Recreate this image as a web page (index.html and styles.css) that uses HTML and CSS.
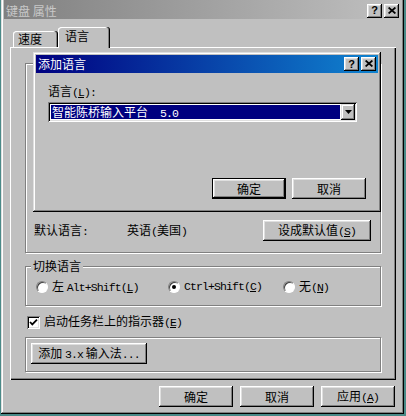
FILE: index.html
```html
<!DOCTYPE html>
<html lang="zh-CN">
<head>
<meta charset="utf-8">
<title>键盘 属性</title>
<link rel="stylesheet" href="styles.css">
</head>
<body>
<div class="win">
  <div class="cap cap-inactive">
    <span class="cap-text">键盘 属性</span>
    <span class="cap-btns">
      <span class="cbtn cbtn-q">?</span>
      <span class="cbtn"><svg width="8" height="7" viewBox="0 0 8 7"><path d="M0.6 0.5 L7.4 6.5 M7.4 0.5 L0.6 6.5" stroke="#000" stroke-width="1.7"/></svg></span>
    </span>
  </div>
  <div class="tabs">
    <div class="tab tab-1">速度</div>
    <div class="tab tab-2">语言</div>
  </div>
  <div class="panel">
    <div class="grp grp-1">
      <div class="defrow">
        <span class="def-label">默认语言<span class="m">:</span></span>
        <span class="def-value">英语<span class="m">(</span>美国<span class="m">)</span></span>
        <button class="btn btn-setdef"><span>设成默认值<span class="m">(<u>S</u>)</span></span></button>
      </div>
    </div>
    <div class="grp grp-2">
      <span class="legend">切换语言</span>
      <div class="radios">
        <span class="ropt ropt-1"><span class="radio"></span><span>左 <span class="m">Alt+Shift(<u>L</u>)</span></span></span>
        <span class="ropt ropt-2"><span class="radio"><span class="dot"></span></span><span class="m">Ctrl+Shift(<u>C</u>)</span></span>
        <span class="ropt"><span class="radio"></span><span>无<span class="m">(<u>N</u>)</span></span></span>
      </div>
    </div>
    <div class="chkrow">
      <span class="chk"><svg width="9" height="9" viewBox="0 0 9 9"><path d="M1 4 L3.3 6.4 L8 1.6" fill="none" stroke="#000" stroke-width="1.8"/></svg></span>
      <span>启动任务栏上的指示器<span class="m">(<u>E</u>)</span></span>
    </div>
    <div class="grp grp-3">
      <button class="btn btn-add"><span>添加 <span class="m">3.x</span> 输入法<span class="m">...</span></span></button>
    </div>

    <div class="dlg">
      <div class="cap cap-active">
        <span class="cap-text">添加语言</span>
        <span class="cap-btns">
          <span class="cbtn cbtn-q">?</span>
          <span class="cbtn"><svg width="8" height="7" viewBox="0 0 8 7"><path d="M0.6 0.5 L7.4 6.5 M7.4 0.5 L0.6 6.5" stroke="#000" stroke-width="1.7"/></svg></span>
        </span>
      </div>
      <div class="dlg-body">
        <div class="dlg-label">语言<span class="m">(<u>L</u>):</span></div>
        <div class="combo">
          <div class="combo-sel">智能陈桥输入平台<span class="m">  5.0</span></div>
          <span class="combo-dd"><svg width="7" height="4" viewBox="0 0 7 4"><path d="M0 0 H7 L3.5 4 Z" fill="#000"/></svg></span>
        </div>
        <div class="dlg-btns">
          <button class="btn btn-def">确定</button>
          <button class="btn">取消</button>
        </div>
      </div>
    </div>
  </div>
  <div class="foot">
    <button class="btn">确定</button>
    <button class="btn">取消</button>
    <button class="btn"><span>应用<span class="m">(<u>A</u>)</span></span></button>
  </div>
</div>
</body>
</html>
```
FILE: styles.css
```css
* { box-sizing: border-box; }
html, body { margin: 0; padding: 0; }
body {
  width: 406px;
  height: 416px;
  overflow: hidden;
  background: #4a8a88;
  font-family: "Noto Sans CJK SC", "Noto Sans", sans-serif;
  font-size: 12px;
  line-height: 14px;
  color: #000;
}
.m {
  font-family: "Liberation Mono", "DejaVu Sans Mono", monospace;
  font-size: 11.5px;
  letter-spacing: -0.9px;
  white-space: pre;
}
u { text-decoration: underline; text-underline-offset: 1px; }

.win {
  margin: -3px 0 0 1px;
  width: 403px;
  height: 417px;
  padding: 3px;
  background: #c0c0c0;
  box-shadow: inset -1px -1px #000, inset 1px 1px #dfdfdf, inset -2px -2px #808080, inset 2px 2px #fff;
  display: flex;
  flex-direction: column;
}

/* caption bars */
.cap {
  display: flex;
  align-items: center;
  justify-content: space-between;
  padding: 0 2px 0 2px;
  flex-shrink: 0;
}
.cap-inactive {
  height: 19px;
  padding-top: 2px;
  background: linear-gradient(90deg, #808080, #c0c0c0);
  color: #c8c8c8;
}
.cap-active {
  height: 18px;
  background: linear-gradient(90deg, #000080, #1084d0);
  color: #fff;
}
.cap-btns { display: flex; gap: 2px; }
.cbtn {
  width: 15px;
  height: 14px;
  background: #c0c0c0;
  box-shadow: inset -1px -1px #000, inset 1px 1px #fff, inset -2px -2px #808080, inset 2px 2px #dfdfdf;
  display: flex;
  align-items: center;
  justify-content: center;
  padding-bottom: 1px;
}
.cbtn-q {
  font-family: "Liberation Sans", sans-serif;
  font-weight: bold;
  font-size: 11px;
  line-height: 12px;
  color: #000;
}

/* tabs */
.tabs {
  height: 20px;
  margin: 8px 5px 0 6px;
  display: flex;
  align-items: flex-end;
  position: relative;
  z-index: 1;
  flex-shrink: 0;
}
.tab {
  background: #c0c0c0;
  border-radius: 3px 3px 0 0;
  box-shadow: inset -1px 0 #000, inset -2px 0 #808080, inset 1px 1px #fff;
}
.tab-1 {
  margin-left: 3px;
  width: 45px;
  height: 16px;
  padding: 1px 0 0 5px;
}
.tab-2 {
  width: 52px;
  height: 21px;
  margin-bottom: -1px;
  padding: 2px 0 0 7px;
}

/* panel */
.panel {
  position: relative;
  margin: 0 5px 0 6px;
  height: 333px;
  padding: 16px 15px 0 15px;
  background: #c0c0c0;
  box-shadow: inset 1px 1px #fff, inset -1px -1px #000, inset -2px -2px #808080;
  flex-shrink: 0;
}
.grp {
  border: 1px solid #808080;
  box-shadow: inset 1px 1px #fff, 1px 1px #fff;
}
.grp-1 {
  height: 190px;
  display: flex;
  align-items: flex-end;
  padding: 0 9px 11px 8px;
}
.defrow {
  width: 100%;
  height: 21px;
  display: flex;
  align-items: center;
}
.def-label { width: 93px; }
.btn {
  font-family: inherit;
  font-size: 12px;
  line-height: 14px;
  color: #000;
  background: #c0c0c0;
  border: 0;
  padding: 0;
  margin: 0;
  height: 21px;
  width: 74px;
  box-shadow: inset -1px -1px #000, inset 1px 1px #fff, inset -2px -2px #808080, inset 2px 2px #dfdfdf;
  display: flex;
  align-items: center;
  justify-content: center;
  white-space: pre;
}
.btn-setdef { margin-left: auto; width: 108px; }

.grp-2 {
  margin-top: 13px;
  height: 40px;
}
.legend {
  display: block;
  width: fit-content;
  margin: -8px 0 0 5px;
  padding: 0 2px;
  background: #c0c0c0;
}
.radios {
  margin-top: 7px;
  height: 14px;
  padding-left: 10px;
  display: flex;
  align-items: center;
}
.ropt { display: flex; align-items: center; gap: 4px; white-space: pre; }
.ropt-1 { width: 132px; }
.ropt-2 { width: 115px; }
.radio {
  width: 12px;
  height: 12px;
  border-radius: 50%;
  background: #fff;
  border: 1px solid;
  border-color: #808080 #fff #fff #808080;
  box-shadow: inset 1px 1px #404040;
  display: flex;
  align-items: center;
  justify-content: center;
}
.dot { width: 4px; height: 4px; border-radius: 50%; background: #000; }

.chkrow {
  margin: 9px 0 0 2px;
  height: 14px;
  display: flex;
  align-items: center;
  gap: 4px;
}
.chk {
  width: 13px;
  height: 13px;
  background: #fff;
  box-shadow: inset 1px 1px #808080, inset -1px -1px #fff, inset 2px 2px #000, inset -2px -2px #dfdfdf;
  display: flex;
  align-items: center;
  justify-content: center;
}

.grp-3 {
  margin-top: 8px;
  height: 35px;
  padding: 5px 0 0 5px;
}
.btn-add { width: 116px; }

/* modal dialog over the list */
.dlg {
  position: absolute;
  left: 23px;
  top: 5px;
  width: 348px;
  height: 160px;
  padding: 3px;
  background: #c0c0c0;
  box-shadow: inset -1px -1px #000, inset 1px 1px #dfdfdf, inset -2px -2px #808080, inset 2px 2px #fff;
  z-index: 2;
  display: flex;
  flex-direction: column;
}
.dlg-body { padding: 0 12px 0 12px; }
.dlg-label { margin-top: 11px; }
.combo {
  margin-top: 2px;
  width: 309px;
  height: 20px;
  padding: 2px;
  background: #fff;
  box-shadow: inset 1px 1px #808080, inset -1px -1px #fff, inset 2px 2px #000, inset -2px -2px #dfdfdf;
  display: flex;
}
.combo-sel {
  flex: 1;
  margin: 1px;
  padding-left: 1px;
  background: #000080;
  color: #fff;
  line-height: 14px;
  white-space: pre;
}
.combo-dd {
  width: 14px;
  background: #c0c0c0;
  box-shadow: inset -1px -1px #000, inset 1px 1px #dfdfdf, inset -2px -2px #808080, inset 2px 2px #fff;
  display: flex;
  align-items: center;
  justify-content: center;
}
.dlg-btns {
  margin-top: 56px;
  display: flex;
  justify-content: flex-end;
  gap: 6px;
}
.btn-def {
  box-shadow: inset 0 0 0 1px #000, inset -2px -2px #000, inset 2px 2px #fff, inset -3px -3px #808080, inset 3px 3px #dfdfdf;
}

.foot {
  margin-top: 6px;
  padding-right: 6px;
  display: flex;
  justify-content: flex-end;
  gap: 7px;
}
```
